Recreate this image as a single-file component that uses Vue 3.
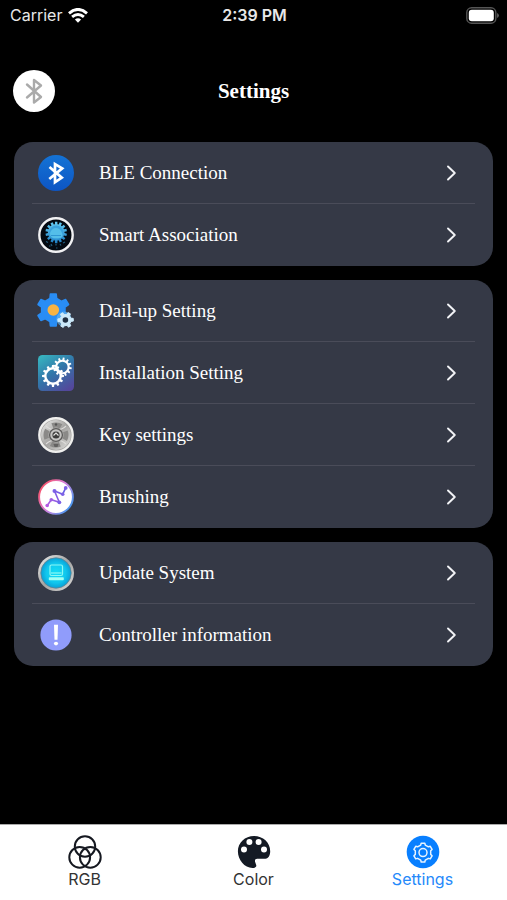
<script setup>
import { ref } from 'vue'

const groups = [
  [
    { id: 'ble', label: 'BLE Connection' },
    { id: 'smart', label: 'Smart Association' },
  ],
  [
    { id: 'dial', label: 'Dail-up Setting' },
    { id: 'install', label: 'Installation Setting' },
    { id: 'key', label: 'Key settings' },
    { id: 'brush', label: 'Brushing' },
  ],
  [
    { id: 'update', label: 'Update System' },
    { id: 'info', label: 'Controller information' },
  ],
]

const tabs = [
  { id: 'rgb', label: 'RGB' },
  { id: 'color', label: 'Color' },
  { id: 'settings', label: 'Settings' },
]
const active = ref('settings')

// Closed outline of a cog wheel with flat-topped teeth.
function gear(cx, cy, teeth, outer, inner, turn = 0, width = 0.5) {
  const step = (Math.PI * 2) / teeth
  const start = (turn * Math.PI) / 180 - Math.PI / 2
  const points = []
  for (let i = 0; i < teeth; i++) {
    const a = start + i * step
    const base = (step * width) / 2 + step * 0.07
    const tip = (step * width) / 2 - step * 0.03
    for (const [r, d] of [[inner, -base], [outer, -tip], [outer, tip], [inner, base]]) {
      points.push(`${(cx + r * Math.cos(a + d)).toFixed(2)} ${(cy + r * Math.sin(a + d)).toFixed(2)}`)
    }
  }
  return `M${points.join('L')}Z`
}
</script>

<template>
  <div class="screen">
    <div class="status">
      <div class="carrier">
        <span>Carrier</span>
        <svg width="20" height="15" viewBox="0 0 20 15" fill="none" stroke="#fff" stroke-width="2.9" aria-hidden="true">
          <path d="M1 5.3Q10-2.5 19 5.3" />
          <path d="M4.1 8.9Q10 3.9 15.9 8.9" />
          <path d="M6.9 11.5Q10 8.8 13.1 11.5L10 14.7Z" fill="#fff" stroke="none" />
        </svg>
      </div>
      <span class="time">2:39 PM</span>
      <svg class="battery" width="33" height="17" viewBox="0 0 33 17" aria-hidden="true">
        <rect x="0.8" y="0.8" width="29" height="15.4" rx="4.8" fill="none" stroke="#555" stroke-width="1.4" />
        <rect x="2.8" y="2.8" width="25" height="11.4" rx="3" fill="#fff" />
        <path d="M31.2 6v5q1.6-.6 1.6-2.5T31.2 6Z" fill="#666" />
      </svg>
    </div>

    <header class="header">
      <button class="bluetooth" type="button" aria-label="Bluetooth">
        <svg width="42" height="42" viewBox="0 0 42 42" fill="none" stroke="#aaa" stroke-width="2.4" stroke-linejoin="round" stroke-linecap="round">
          <path d="M14 14.5L28 27L21 32.5V10L28 15.5L14 27.5" />
        </svg>
      </button>
      <h1>Settings</h1>
    </header>

    <svg class="paints" width="0" height="0" aria-hidden="true">
      <defs>
        <linearGradient id="bleFill" x2="0" y2="1"><stop stop-color="#1473d5" /><stop offset="1" stop-color="#0d55c4" /></linearGradient>
        <linearGradient id="smartFill" x2="0" y2="1"><stop stop-color="#67cdf3" /><stop offset="1" stop-color="#1e7fc4" /></linearGradient>
        <linearGradient id="installFill" x1="0.1" x2="0.8" y2="1"><stop stop-color="#37b5c0" /><stop offset="0.5" stop-color="#3275a9" /><stop offset="1" stop-color="#54479b" /></linearGradient>
        <linearGradient id="metal" x2="1" y2="1"><stop stop-color="#eeeeec" /><stop offset="0.5" stop-color="#a4a3a1" /><stop offset="1" stop-color="#dededc" /></linearGradient>
        <linearGradient id="ring" x1="0" y1="0.2" x2="1" y2="0.9"><stop stop-color="#fa4f61" /><stop offset="0.45" stop-color="#d780dc" /><stop offset="1" stop-color="#2d9df4" /></linearGradient>
        <linearGradient id="brushLine" x1="0" y1="1" x2="1" y2="0"><stop stop-color="#b45be2" /><stop offset="1" stop-color="#5860e5" /></linearGradient>
        <radialGradient id="cyan"><stop stop-color="#13dff5" /><stop offset="0.65" stop-color="#10c6ed" /><stop offset="1" stop-color="#08a0d6" /></radialGradient>
      </defs>
    </svg>

    <main class="groups">
      <ul v-for="(group, g) in groups" :key="g" class="card">
        <li v-for="item in group" :key="item.id">
          <button class="row" type="button">
            <svg class="icon" viewBox="0 0 36 36" aria-hidden="true">
              <g v-if="item.id === 'ble'">
                <circle cx="18" cy="18" r="18" fill="url(#bleFill)" />
                <path d="M11.5 12L23.8 22.7L17 27.3V9.2L24.2 13.4L11.3 24" fill="none" stroke="#fff" stroke-width="2.7" />
              </g>
              <g v-else-if="item.id === 'smart'">
                <circle cx="18" cy="18" r="16.7" fill="#030911" stroke="#f1f1f3" stroke-width="2.4" />
                <path :d="gear(18.2, 15.4, 14, 10.8, 8.3, 0, 0.55)" fill="url(#smartFill)" />
                <circle cx="18.2" cy="15.4" r="7" fill="#3ba3dd" />
                <path d="M12 16q2-5 6-5t6 5-3 5h-6q-3-1-3-5Z" fill="#54bee9" />
                <path d="M13 18.5h10" stroke="#2d92d0" stroke-width="0.9" />
                <path d="M8 24.5l2 1M13 27l1 2M18 27v1.5M22 27l1 1.5M27 25l-2 1M11 29h1.5M18 31h1.5" stroke="#235c7c" stroke-width="1.2" />
              </g>
              <g v-else-if="item.id === 'dial'">
                <path :d="gear(15.3, 17, 6, 16.2, 12, 0, 0.4)" fill="#298df5" stroke="#298df5" stroke-width="1.6" stroke-linejoin="round" />
                <circle cx="15.3" cy="17" r="5.8" fill="#f8b343" />
                <circle cx="26" cy="26" r="7.6" fill="#65b5f0" opacity="0.65" />
                <path :d="gear(27.6, 27, 6, 7.8, 5.6, 28, 0.4)" fill="#cce9fa" stroke="#cce9fa" stroke-linejoin="round" />
                <circle cx="27.4" cy="27" r="2.8" fill="#203044" />
              </g>
              <g v-else-if="item.id === 'install'">
                <rect width="36" height="36" rx="4.5" fill="url(#installFill)" />
                <g fill="#fff" fill-rule="evenodd">
                  <path :d="gear(15, 21, 12, 11, 8.8, 0, 0.42) + 'M21.5 21a6.5 6.5 0 1 0-13 0a6.5 6.5 0 1 0 13 0Z'" />
                  <path :d="gear(24.4, 12, 12, 9.4, 7.3, 8, 0.42) + 'M29.6 12a5.2 5.2 0 1 0-10.4 0a5.2 5.2 0 1 0 10.4 0Z'" />
                </g>
              </g>
              <g v-else-if="item.id === 'key'">
                <circle cx="18" cy="18" r="16.7" fill="#9c9b99" stroke="#efefed" stroke-width="2.4" />
                <circle cx="18" cy="18" r="15" fill="url(#metal)" />
                <circle cx="18" cy="18" r="10" fill="none" stroke="#8a8987" stroke-width="5" stroke-dasharray="9 6.7" stroke-dashoffset="4" />
                <path d="M8 9q4 4 10 4t10-4M8 27q4-4 10-4t10 4" fill="none" stroke="#dddcda" stroke-width="1.1" />
                <circle cx="18" cy="18" r="6.4" fill="#c4c3c1" stroke="#5c5b5a" stroke-width="1.3" />
                <circle cx="18" cy="18" r="3.6" fill="#3d3c3b" />
                <path d="M15.5 18.5L18 16l2.5 2.5" stroke="#e2e1df" stroke-width="1.2" fill="none" />
                <circle cx="18" cy="7.5" r="1.2" fill="#555" />
                <path d="M15.5 27h5l-1 3h-3Z" fill="#626160" />
              </g>
              <g v-else-if="item.id === 'brush'">
                <circle cx="18" cy="18" r="16.9" fill="#fff" stroke="url(#ring)" stroke-width="1.9" />
                <path d="M9.2 26.5L13.3 20.8L21.3 23.3L16.5 12L24.7 15.2L27.7 8.9" fill="none" stroke="url(#brushLine)" stroke-width="1.6" />
                <g fill="#7d61e6"><circle cx="9.2" cy="26.5" r="1.8" fill="#b45be2" /><circle cx="13.3" cy="20.8" r="1.8" fill="#a05fe4" /><circle cx="21.3" cy="23.3" r="1.9" /><circle cx="16.5" cy="12" r="2" /><circle cx="24.7" cy="15.2" r="1.8" /><circle cx="27.7" cy="8.9" r="1.9" /></g>
              </g>
              <g v-else-if="item.id === 'update'">
                <circle cx="18" cy="18" r="18" fill="url(#metal)" />
                <circle cx="18" cy="18" r="15.2" fill="url(#cyan)" stroke="#648391" stroke-width="0.8" />
                <rect x="12" y="10" width="12.5" height="10.5" rx="1.5" fill="none" stroke="#8cf8f5" stroke-width="1.2" />
                <path d="M13 18h10.5" stroke="#8cf8f5" stroke-width="1.2" />
                <rect x="10.8" y="22.3" width="15" height="3" rx="0.8" fill="#a1fff4" />
              </g>
              <g v-else>
                <circle cx="18" cy="18" r="15.6" fill="#909cfb" />
                <path d="M16 7.8h4l-.5 15h-3Z" fill="#fff" />
                <ellipse cx="18" cy="26.6" rx="2.1" ry="1.8" fill="#fff" />
              </g>
            </svg>
            <span class="label">{{ item.label }}</span>
            <svg width="11" height="16" viewBox="0 0 11 16" fill="none" stroke="#f2f3f6" stroke-width="1.9" stroke-linecap="round" stroke-linejoin="round" aria-hidden="true">
              <path d="M2 1.5L8.8 8L2 14.5" />
            </svg>
          </button>
        </li>
      </ul>
    </main>

    <nav class="tabs">
      <button v-for="tab in tabs" :key="tab.id" type="button" class="tab" :class="{ active: active === tab.id }" @click="active = tab.id">
        <svg width="34" height="34" viewBox="0 0 34 34" aria-hidden="true">
          <g v-if="tab.id === 'rgb'" fill="none" stroke="#151820" stroke-width="2">
            <circle cx="17" cy="11.5" r="10.2" /><circle cx="11.7" cy="22.3" r="10.4" /><circle cx="22.3" cy="22.3" r="10.4" />
          </g>
          <path
            v-else-if="tab.id === 'color'" fill="#141a24" fill-rule="evenodd"
            d="M17 1C8 1 .9 7.8.9 16.3C.9 25 7.5 33 15.5 33C18 33 19.8 31.8 19.2 30L18.5 28C17.3 25.5 18 23.8 20.2 23.8H28.5C31.5 23.8 33.2 20 33.2 16.3C33.2 7.5 26 1 17 1ZM12.4 4.1a3 3 0 1 1 0 6a3 3 0 1 1 0-6ZM21.6 4.1a3 3 0 1 1 0 6a3 3 0 1 1 0-6ZM7 11.6a3 3 0 1 1 0 6a3 3 0 1 1 0-6ZM27 11.6a3 3 0 1 1 0 6a3 3 0 1 1 0-6Z"
          />
          <g v-else>
            <circle cx="17" cy="17" r="16.3" fill="#087fff" />
            <path :d="gear(17, 17.6, 6, 9.6, 7.9, 0, 0.42)" fill="none" stroke="#e8f4ff" stroke-width="1.5" stroke-linejoin="round" />
            <circle cx="17" cy="17.6" r="4" fill="none" stroke="#e8f4ff" stroke-width="1.5" />
          </g>
        </svg>
        <span>{{ tab.label }}</span>
      </button>
    </nav>
  </div>
</template>

<style>
body {
  margin: 0;
  background: #000;
}
</style>

<style scoped>
.screen {
  display: flex;
  flex-direction: column;
  min-height: 100vh;
  background: #000;
  color: #fff;
  font-family: Inter, "Liberation Sans", sans-serif;
}
button {
  margin: 0;
  border: 0;
  background: none;
  color: inherit;
  font: inherit;
  cursor: pointer;
}
svg {
  display: block;
  flex: none;
}
.status {
  display: grid;
  grid-template-columns: 1fr auto 1fr;
  align-items: center;
  height: 30px;
  padding: 0 8px 0 10px;
  font-size: 16px;
  color: #e8e8e8;
}
.carrier {
  display: flex;
  align-items: center;
  gap: 6px;
}
.time {
  font-weight: 600;
}
.battery {
  justify-self: end;
}
.header {
  display: grid;
  grid-template-columns: 1fr auto 1fr;
  align-items: center;
  height: 42px;
  margin-top: 40px;
  padding: 0 13px;
}
.bluetooth {
  width: 42px;
  height: 42px;
  padding: 0;
  border-radius: 50%;
  background: #fff;
}
h1 {
  margin: 0;
  font: 700 21px/24px "Liberation Serif", serif;
}
.groups {
  display: flex;
  flex: 1;
  flex-direction: column;
  gap: 14px;
  padding: 30px 14px;
}
.card {
  margin: 0;
  padding: 0 18px;
  border-radius: 19px;
  background: #353946;
  list-style: none;
}
.card li + li {
  box-shadow: 0 -1px #4a4c59;
}
.row {
  display: flex;
  align-items: center;
  width: 100%;
  height: 62px;
  padding: 0 18px 0 6px;
  text-align: left;
}
.icon {
  width: 36px;
  height: 36px;
  overflow: visible;
}
.label {
  flex: 1;
  padding-left: 25px;
  font: 19px/24px "Liberation Serif", serif;
}
.tabs {
  display: grid;
  grid-template-columns: repeat(3, 1fr);
  height: 75px;
  border-top: 1px solid #aaa;
  background: #fff;
}
.tab {
  display: flex;
  flex-direction: column;
  align-items: center;
  padding: 10px 0 0;
  color: #333;
  font-size: 16px;
  line-height: 20px;
}
.tab.active {
  color: #2589fa;
}
</style>
